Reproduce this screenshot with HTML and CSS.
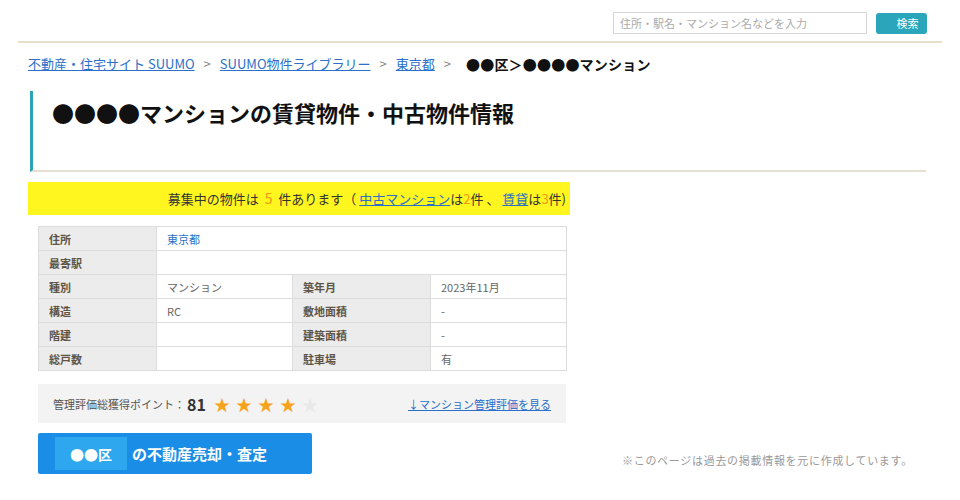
FILE: index.html
```html
<!DOCTYPE html>
<html lang="ja">
<head>
    <meta charset="UTF-8">
    <title>●●●●マンションの賃貸物件・中古物件情報</title>
    <link rel="stylesheet" href="styles.css">
</head>
<body>
    <!-- 検索 -->
    <div class="top">
        <input class="search" type="text" placeholder="住所・駅名・マンション名などを入力">
        <button class="search-btn">検索</button>
    </div>

    <!-- パンくず -->
    <div class="crumbs">
        <a href="#">不動産・住宅サイト SUUMO</a><span class="sep">&gt;</span>
        <a href="#">SUUMO物件ライブラリー</a><span class="sep">&gt;</span>
        <a href="#">東京都</a><span class="sep">&gt;</span>
        <strong>●●区＞●●●●マンション</strong>
    </div>

    <h1 class="title">●●●●マンションの賃貸物件・中古物件情報</h1>

    <p class="notice">募集中の物件は <span class="num">5</span> 件あります（ <a href="#">中古マンション</a>は<span class="num-s">2</span>件 、 <a href="#">賃貸</a>は<span class="num-s">3</span>件)</p>

    <table class="info">
        <colgroup><col class="c1"><col class="c2"><col class="c3"><col class="c4"></colgroup>
        <tr><th>住所</th><td colspan="3"><a href="#">東京都</a></td></tr>
        <tr><th>最寄駅</th><td colspan="3"></td></tr>
        <tr><th>種別</th><td>マンション</td><th>築年月</th><td>2023年11月</td></tr>
        <tr><th>構造</th><td>RC</td><th>敷地面積</th><td>-</td></tr>
        <tr><th>階建</th><td></td><th>建築面積</th><td>-</td></tr>
        <tr><th>総戸数</th><td></td><th>駐車場</th><td>有</td></tr>
    </table>

    <div class="rating">
        <div class="score">管理評価総獲得ポイント：<b>81</b>
            <span class="stars">★★★★<span class="off">★</span></span>
        </div>
        <a href="#">↓マンション管理評価を見る</a>
    </div>

    <div class="bottom">
        <a class="sell" href="#"><span class="ward">●●区</span>の不動産売却・査定</a>
        <p class="note">※このページは過去の掲載情報を元に作成しています。</p>
    </div>
</body>
</html>
```

FILE: styles.css
```css
body { margin: 0; background: #fff; color: #222; font-family: "Noto Sans CJK JP", "Noto Sans", sans-serif; font-size: 12px; }
a { color: #2a6fc9; }

.top { display: flex; justify-content: flex-end; align-items: center; gap: 9px; margin: 0 18px; padding: 12px 15px 7px 0; border-bottom: 2px solid #e6dfcc; }
.search { width: 254px; height: 22px; box-sizing: border-box; border: 1px solid #d6d6d6; padding: 0 6px; font-family: inherit; font-size: 11px; color: #999; }
.search::placeholder { color: #aaa; }
.search-btn { width: 51px; height: 21px; border: none; border-radius: 3px; background: #2aa5b9; color: #fff; font-family: inherit; font-size: 11px; padding: 0 0 0 12px; }

.crumbs { padding: 8px 0 0 28px; height: 25px; font-size: 13px; display: flex; align-items: center; }
.crumbs a { color: #2a6fc9; }
.crumbs .sep { color: #888; margin: 0 9px; }
.crumbs strong { margin-left: 6px; color: #111; font-weight: bold; font-size: 14px; letter-spacing: 0.2px; }

.title { margin: 15px 34px 0 30px; height: 81px; box-sizing: border-box; border-left: 3px solid #2ca3b6; border-bottom: 2px solid #e4e0d2; padding: 6px 0 0 19px; font-size: 22px; font-weight: bold; line-height: 30px; color: #111; }

.notice { margin: 10px 0 0 28px; width: 542px; height: 33px; box-sizing: border-box; background: #fff51f; text-align: right; padding-right: 4px; line-height: 33px; font-size: 13px; color: #333; }
.notice .num { color: #f39a12; font-size: 14px; margin: 0 3px; }
.notice .num-s { color: #f39a12; }
.notice a { color: #2a6fc9; }

.info { margin: 11px 0 0 38px; width: 528px; border-collapse: collapse; table-layout: fixed; font-size: 11px; }
.info .c1 { width: 118px; }
.info .c2 { width: 136px; }
.info .c3 { width: 138px; }
.info .c4 { width: 136px; }
.info th, .info td { height: 23px; border: 1px solid #dcdcdc; padding: 0 10px; text-align: left; }
.info th { background: #ececec; color: #5e5546; font-weight: bold; }
.info td { color: #666; }
.info td a { color: #2a6fc9; text-decoration: none; }

.rating { margin: 13px 0 0 38px; width: 528px; height: 39px; box-sizing: border-box; background: #f3f3f3; display: flex; align-items: center; justify-content: space-between; padding: 0 15px; font-size: 11px; }
.rating .score { color: #555; display: flex; align-items: center; }
.rating b { font-size: 16px; color: #333; margin-left: 2px; }
.rating .stars { color: #f7a21b; font-size: 16px; letter-spacing: 6px; margin-left: 8px; }
.rating .stars .off { color: #e8e8e8; }

.bottom { display: flex; align-items: center; margin: 10px 0 0 38px; }
.sell { display: flex; align-items: center; width: 274px; height: 41px; box-sizing: border-box; padding: 4px 17px; background: #1a8de6; border-radius: 2px; color: #fff; font-size: 15px; font-weight: bold; text-decoration: none; }
.sell .ward { display: flex; align-items: center; height: 33px; padding: 0 15px; margin-right: 5px; background: #2ea7ee; font-size: 14px; }
.note { margin: 12px 0 0 310px; font-size: 11px; letter-spacing: 0.7px; color: #999; }
```
